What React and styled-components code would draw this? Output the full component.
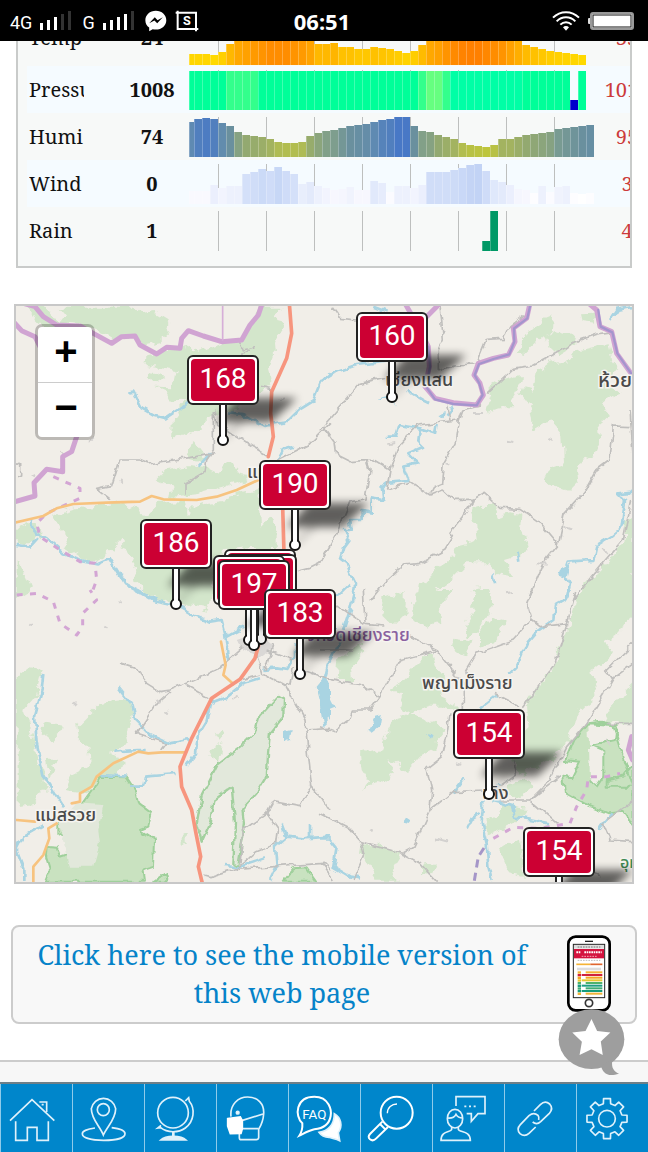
import React from "react";
import styled, { createGlobalStyle } from "styled-components";

const SERIF = '"Noto Serif", "Droid Serif", "DejaVu Serif Condensed", "Liberation Serif", serif';

const GlobalStyle = createGlobalStyle`
  * {
    box-sizing: border-box;
  }
  body {
    margin: 0;
    background: #ffffff;
    font-family: ${SERIF};
  }
`;

const Page = styled.div`
  min-height: 100vh;
  display: flex;
  flex-direction: column;
`;

/* ---------- status bar ---------- */

const StatusBar = styled.header`
  position: sticky;
  top: 0;
  z-index: 20;
  height: 41px;
  padding: 0 14px 0 10px;
  display: grid;
  grid-template-columns: 1fr auto 1fr;
  align-items: center;
  background: #000000;
  color: #ffffff;
  font-family: Roboto, "Liberation Sans", sans-serif;
`;

const StatusGroup = styled.div`
  display: flex;
  align-items: center;
  justify-content: ${(p) => (p.$end ? "flex-end" : "flex-start")};
  gap: 8px;
`;

const Network = styled.span`
  padding-top: 4px;
  font-size: 18px;
  line-height: 20px;
`;

const Clock = styled.time`
  font-family: "Noto Sans", sans-serif;
  font-size: 22px;
  font-weight: 700;
  line-height: 40px;
`;

function Signal({ level }) {
  return (
    <svg width="34" height="20" viewBox="0 0 34 20">
      {[7, 10, 13, 16, 19].map((h, i) => (
        <rect key={h} x={i * 7} y={19 - h} width="3" height={h} fill={i < level ? "#fff" : "#333"} />
      ))}
    </svg>
  );
}

function Messenger() {
  return (
    <svg width="22" height="22" viewBox="0 0 63 63">
      <path d="M31 2C14 2 1 14 1 29c0 9 4 16 11 21v11l10-6c3 1 6 1 9 1 17 0 30-12 30-27S48 2 31 2z" fill="#fff" />
      <path d="M12 38l16-17 8 8 15-8-16 17-8-8z" fill="#000" />
    </svg>
  );
}

function CropIcon() {
  return (
    <svg width="24" height="22" viewBox="0 0 72 66">
      <path d="M8 2V57H70M2 8H63V64" fill="none" stroke="#fff" strokeWidth="6" />
      <text x="36" y="46" textAnchor="middle" fill="#fff" fontFamily="Roboto, sans-serif" fontSize="38" fontWeight="700">
        S
      </text>
    </svg>
  );
}

function Wifi() {
  return (
    <svg width="28" height="20" viewBox="0 0 84 60">
      <g fill="none" stroke="#fff" strokeWidth="6">
        <path d="M3 20C25-2 59-2 81 20" />
        <path d="M14 31C30 15 54 15 70 31" />
        <path d="M25 41C35 31 49 31 59 41" />
      </g>
      <path d="M33 49C38 44 46 44 51 49L42 59z" fill="#fff" />
    </svg>
  );
}

function Battery() {
  return (
    <svg width="46" height="18" viewBox="0 0 46 18">
      <rect x="0" y="6" width="3" height="6" rx="1" fill="#ddd" />
      <rect x="3" y="1" width="42" height="16" rx="2" fill="#fff" stroke="#999" strokeWidth="2" />
      <rect x="5" y="3" width="38" height="12" fill="#fff" stroke="#111" strokeWidth="1" />
    </svg>
  );
}

/* ---------- readings table ---------- */

const Panel = styled.section`
  margin: -33px 16px 0;
  padding: 0 0 12px 9px;
  border: 2px solid #c9cbca;
  background: #f7f9f8;
  overflow: hidden;
`;

const Readings = styled.table`
  width: 630px;
  table-layout: fixed;
  border-collapse: collapse;
  font-size: 20px;
  line-height: 28px;
  color: #111111;
`;

const Row = styled.tr`
  height: ${(p) => (p.$tall ? 56 : 47)}px;
  background: ${(p) => (p.$shaded ? "#f5fbff" : "transparent")};
`;

const Label = styled.th`
  width: 88px;
  padding: 0 2px;
  font-weight: 400;
  text-align: left;
`;

const LabelText = styled.div`
  width: 55px;
  overflow: hidden;
`;

const Value = styled.td`
  width: 74px;
  padding: 0;
  font-weight: 700;
  text-align: center;
`;

const ChartCell = styled.td`
  width: 408px;
  padding: 0 0 ${(p) => (p.$tall ? 1 : 0)}px;
  vertical-align: ${(p) => (p.$tall ? "bottom" : "middle")};
`;

const Max = styled.td`
  width: 60px;
  padding: 0;
  color: #cc3b3b;
  text-align: center;
`;

const Chart = styled.svg`
  display: block;
`;

const mix = (stops, h) => {
  let i = 1;
  while (i < stops.length - 1 && h > stops[i][0]) i++;
  const [h0, a] = stops[i - 1];
  const [h1, b] = stops[i];
  const t = Math.max(0, Math.min(1, (h - h0) / (h1 - h0)));
  return `rgb(${a.map((v, k) => Math.round(v + (b[k] - v) * t)).join(",")})`;
};

const tempStops = [[10, [255, 217, 0]], [21, [255, 184, 0]], [38, [255, 128, 0]]];
const humiStops = [
  [10, [190, 197, 58]],
  [15, [175, 187, 84]],
  [22, [147, 169, 112]],
  [27, [126, 158, 142]],
  [31, [106, 144, 158]],
  [35, [95, 138, 178]],
  [40, [72, 120, 198]],
];
const windStops = [
  [10, [255, 255, 255]],
  [14, [247, 247, 254]],
  [18, [237, 241, 253]],
  [22, [227, 234, 251]],
  [30, [212, 224, 249]],
  [40, [194, 211, 245]],
];

const temp = [
  11, 11, 11, 10, 13, 21, 26, 28, 30, 32, 34, 34, 34, 32, 30, 27, 21, 21, 22, 18, 18, 16, 16, 18, 17,
  16, 14, 12, 14, 20, 26, 28, 32, 35, 37, 38, 38, 36, 34, 32, 28, 24, 20, 18, 16, 14, 13, 12, 11, 10,
];
const humi = [
  35, 38, 39, 38, 34, 31, 25, 22, 21, 20, 18, 15, 14, 14, 15, 21, 24, 26, 27, 29, 31, 32, 33, 35, 37,
  38, 40, 40, 31, 26, 25, 22, 20, 18, 14, 12, 11, 10, 12, 18, 18, 20, 22, 23, 24, 25, 28, 29, 30, 31, 32,
];
const wind = [
  13, 13, 13, 19, 16, 18, 18, 30, 32, 35, 33, 37, 33, 30, 20, 22, 18, 16, 14, 15, 17, 14, 14, 23, 21,
  12, 18, 18, 16, 19, 32, 32, 32, 34, 36, 39, 40, 33, 24, 22, 19, 15, 14, 11, 18, 12, 17, 18, 11, 10, 11,
];

const pressureColor = (i) => {
  if (i === 48) return "#0000cc";
  if (i === 30 || i === 31) return "#66ff80";
  if ((i > 4 && i < 9) || i === 29 || i === 32) return "#33ff8c";
  return i > 32 && i < 42 ? "#00ffa6" : "#00ff99";
};

const scale = (heights, stops) => heights.map((h) => ({ h, color: mix(stops, h) }));

const rows = [
  { label: "Temp", value: 24, max: 35, bars: scale(temp, tempStops), tall: true },
  {
    label: "Pressure",
    value: 1008,
    max: 1012,
    bars: Array.from({ length: 50 }, (_, i) => ({ h: i === 48 ? 10 : 39, color: pressureColor(i) })),
    shaded: true,
  },
  { label: "Humi", value: 74, max: 95, bars: scale(humi, humiStops) },
  { label: "Wind", value: 0, max: 3, bars: scale(wind, windStops), shaded: true },
  {
    label: "Rain",
    value: 1,
    max: 4,
    bars: Array.from({ length: 50 }, (_, i) => ({ h: i === 37 ? 10 : i === 38 ? 40 : 0, color: "#009966" })),
  },
];

function BarChart({ bars }) {
  return (
    <Chart width="408" height="40" viewBox="0 0 408 40">
      {Array.from({ length: 8 }, (_, i) => (
        <rect key={i} x={29 + i * 48} y="0" width="1" height="40" fill="#bdbfbe" />
      ))}
      {bars.map((bar, i) => {
        const x = i === 0 ? 0 : 5 + (i - 1) * 8;
        const w = i === 0 ? 5 : 8;
        if (!bar.h) return null;
        return (
          <g key={i}>
            <rect x={x} y={40 - bar.h} width={w} height={bar.h} fill={bar.color} />
            <rect x={x} y={40 - bar.h} width="1" height={bar.h} fill="#fff" opacity="0.25" />
          </g>
        );
      })}
    </Chart>
  );
}

/* ---------- map ---------- */

const MapBox = styled.section`
  position: relative;
  height: 580px;
  margin: 36px 14px 0;
  border: 2px solid #c8c8c8;
  background: #f1eee8;
  overflow: hidden;
`;

const MapDrawing = styled.svg`
  position: absolute;
  left: 0;
  top: 0;
  width: 616px;
  min-width: 100%;
  height: 576px;
`;

const ZoomControl = styled.div`
  position: absolute;
  left: 19px;
  top: 18px;
  z-index: 5;
  width: 60px;
  border: 3px solid rgba(0, 0, 0, 0.22);
  border-radius: 7px;
  background: #ffffff;
  background-clip: padding-box;
  display: flex;
  flex-direction: column;
`;

const ZoomButton = styled.button`
  height: 55px;
  padding: 0 0 0 2px;
  border: 0;
  background: transparent;
  color: #000000;
  font-family: "Liberation Sans", sans-serif;
  font-size: 40px;
  font-weight: 700;
  line-height: 48px;
  display: flex;
  justify-content: center;
  align-items: flex-start;

  & + & {
    border-top: 1px solid #cccccc;
  }
`;

const Pin = styled.button`
  position: absolute;
  width: 72px;
  height: 90px;
  padding: 0;
  border: 0;
  background: transparent;
  color: #ffffff;
  font-family: Roboto, sans-serif;
  font-size: 28px;
  line-height: 48px;
  display: flex;
  justify-content: center;
  align-items: flex-start;
`;

const PinShape = styled.svg`
  position: absolute;
  left: 0;
  top: 0;
  overflow: visible;
`;

const PinText = styled.span`
  position: relative;
`;

/* tip of every marker inside the map box */
const pins = [
  { x: 376, y: 91, aqi: 160 },
  { x: 207, y: 134, aqi: 168 },
  { x: 279, y: 239, aqi: 190 },
  { x: 160, y: 298, aqi: 186 },
  { x: 244, y: 328 },
  { x: 245, y: 333 },
  { x: 233, y: 334 },
  { x: 238, y: 339, aqi: 197 },
  { x: 284, y: 368, aqi: 183 },
  { x: 473, y: 488, aqi: 154 },
  { x: 543, y: 606, aqi: 154 },
];

function Marker({ x, y, aqi }) {
  return (
    <Pin type="button" style={{ left: x - 36, top: y - 85 }}>
      <PinShape width="72" height="90" viewBox="0 0 72 90">
        {aqi && (
          <g filter="url(#pinShadow)" opacity="0.6">
            <path d="M28 67L50 43H110L84 67z" />
            <path d="M36 84L60 62" stroke="#000" strokeWidth="3" opacity="0.5" />
          </g>
        )}
        <rect x="33" y="47" width="6" height="34" fill="#fff" stroke="#222" strokeWidth="2" />
        <circle cx="36" cy="85" r="5" fill="#fff" stroke="#111" strokeWidth="2" />
        <rect x="34" y="47" width="4" height="35" fill="#fff" />
        <rect x="1" y="1" width="70" height="48" rx="5" fill="#fff" stroke="#222" strokeWidth="2" />
        <rect x="4" y="4" width="64" height="42" rx="4" fill="#cc0033" />
      </PinShape>
      <PinText>{aqi}</PinText>
    </Pin>
  );
}

const NW = "translate(10 300) scale(0.33333)";
const NE = "translate(320 300) scale(0.33333)";
const SW = "translate(10 590) scale(0.33333)";
const SE = "translate(320 590) scale(0.33333)";

const forests = [
  [NW, "M50 20H110L150 70L120 100L80 60z M140 20H375L385 40L430 30L480 60L465 80L480 100L450 130L400 140L375 105L330 120L300 110L215 75L150 70L165 50z"],
  [NW, "M755 20H815L800 50L822 80L792 125L795 160L780 200L785 240L750 275L700 295L680 330L600 355L570 385L520 405L492 418L495 350L530 300L485 305L470 275L435 260L490 262L500 210L410 195L412 165L530 140L560 160L640 130L700 115z"],
  [NW, "M410 215L440 220L465 235L450 248L415 235z M545 425L560 445L580 470L600 480L560 478L530 470z"],
  [NW, "M440 540L470 510L540 498L590 505L620 520L660 480L690 520L740 530L640 560L560 582L480 592L485 560z"],
  [NW, "M130 645L200 625L330 610L390 625L400 650L440 612L525 605L530 640L560 610L640 600L700 580L745 570L750 680L780 650L800 700V740L640 750L610 830L600 920H540L430 890L380 850L372 790L330 720L310 750L240 790L165 740L180 715L150 690z"],
  [NW, "M20 680L60 665L95 700L50 740L20 720z M20 780L45 830L62 870L30 890H20z"],
  [NE, "M590 160L625 95L660 60L700 42L695 90L640 135L610 165z M670 110L700 92L750 105L770 130L720 160L680 140z M780 40L830 38L825 65L785 60z"],
  [NE, "M865 130L875 185L900 215L865 235L870 260L905 275L860 290L835 310L862 350L832 375L838 420L818 470L770 500L775 545L745 575L700 560L675 535L690 505L735 490L730 400L700 365L670 372L640 390L630 320L600 280L605 265L640 270L650 220L690 190L740 180L780 150z"],
  [NE, "M500 335L520 280L505 265L545 240L605 225L605 250L575 300L580 325L540 325z"],
  [NE, "M450 630L480 620L525 622L530 650L570 640L605 645L600 680L622 735L605 765L555 780L580 830L530 820L500 790L440 790L380 850L340 880L330 920H290L300 850L330 840L345 805L405 770L410 740L470 725L465 670z"],
  [NE, "M940 640V920H760L800 850L860 790L910 730L915 660z M190 890L230 875L260 880V920H190z M460 870L480 865L490 920H450z"],
  [SE, "M200 20H250L260 70L220 110L190 80z M280 20L340 0H400L350 60L355 95L310 110L280 90z M470 0H510L520 40L470 130L440 140L435 110L460 60z"],
  [SE, "M480 120L520 80L560 90L545 120L520 160L480 170z M400 140L460 150L445 200L395 180z M55 210L120 160L130 180L95 230L100 270L50 270z"],
  [SE, "M300 210L340 190L350 230L380 270L360 320L400 340L420 360L370 350L330 350L270 370L240 350L250 320L210 300L250 280L270 240z M230 380L270 370L330 390L375 420L350 450L340 480L300 500L260 545L230 520L180 500L200 440z M120 490L190 480L200 510L225 540L200 580L170 570L120 600L145 570L125 540z"],
  [SE, "M775 0H940V60L900 130L850 160L880 190L820 240L830 320L770 370L760 410L730 470L700 500L600 560L560 480L620 420L615 350L700 230L740 120z"],
  [SE, "M940 280L870 360L850 400L940 400z M560 590L620 560L640 590L600 625L565 610z M500 690L560 650L620 660L600 690L540 720L500 740z M540 780L600 740L610 860L570 850z M125 760L180 765L240 790L215 830L230 875H160L150 830L120 790z M300 830L350 820L340 850L300 850z"],
  [SW, "M20 260L55 235L95 240L75 320L40 360L70 440L75 470L110 590L70 640L20 645z M100 400L150 410L130 460L95 430z M110 500L150 500L130 530L120 570z"],
  [SW, "M205 400L265 340L340 330L370 350L355 440L360 460L330 480L300 490L350 520L300 560L230 610L170 600L180 560L240 530L235 480L210 450z"],
  [SW, "M600 500L620 460L640 465L630 510z M615 440L640 415L645 430L625 455z M515 730L530 728V765L515 760z M380 0H560L600 60L500 40z"],
];

const reserves = [
  [SW, "M210 650L245 600L270 560L350 562L375 600L385 640L425 670L415 710L390 720L435 750L432 830L400 840L405 875H105L120 840L108 800L110 768L140 770L150 800L180 790L170 740L145 730V700z"],
  [SW, "M820 875L850 835L890 832L920 875z M430 875L465 850L470 875z"],
  [SE, "M805 400L840 395L890 405L885 450L815 465L850 480V560L830 590L810 570M805 400L760 450L735 510L780 515L755 565L730 560L735 610L790 640L865 670L910 665L940 710V520L910 560L860 570V590L940 590L880 405z"],
];

const greys = [
  [NW, "M690 125L700 150L740 140M690 160L720 155M610 330V450L590 480L585 515L525 550V590M615 460L560 470L490 480L420 492L390 480L330 480L305 560L260 568L300 600M615 325L620 370L680 410L720 435L770 465M960 370L900 430L830 465L800 480M940 380L955 410M960 740L930 790L900 805L860 815M750 262L790 270M20 490L32 495V525L20 530"],
  [NE, "M35 20L60 55L110 60M360 20L365 60L370 120L355 150V210M355 210L400 195L470 192L500 118L550 115L560 90L600 60L625 40M0 390L120 250L200 230M500 280L580 205L640 195L780 120L840 100L880 95M10 380L45 430L50 465L90 485L160 480L210 510L235 440L295 375L415 360L425 330L480 315M380 320L390 360M415 360L405 430L370 490L365 550L340 560L330 580M140 480L150 510L135 600L90 605L50 700L0 790M210 510L200 570L270 545L330 585L370 570L400 598H460L490 580L540 625L600 628L660 670L715 735L670 790L625 900M460 600L430 650L390 700L400 710L375 750L300 790L250 795L190 850L150 900M715 735L735 640L790 580L830 510L870 480L880 378L930 380M930 330L940 480M935 600L910 720L850 790L760 900"],
  [SW, "M330 218L375 232L410 280L450 305L480 300L540 275L620 240L700 170M480 305L440 340L380 430L470 460L455 480M530 285L600 325M675 275L750 255M740 190L755 250L830 290L885 390L905 590L890 610L870 650L790 635L770 670L700 720L690 820M905 590L940 630L960 660M770 670L805 720L800 760L740 785L680 835L600 860L580 855M680 838L940 820L960 840M770 180L850 210M890 420L960 415M790 160L765 240M850 230L840 280L825 290M880 240L960 270"],
  [SE, "M130 0L135 100L190 105M0 180L100 180M0 260L60 275L130 285L180 320L240 210L350 180L430 280L430 360M180 320L150 360H100L90 390L40 425L0 410M350 180L270 140M635 0L620 40L635 90L660 110L745 100M635 90L580 150L470 190L440 240L445 270M770 0L745 90L700 230L610 350M520 310L600 350M390 370L380 440L365 500L320 535L335 600L330 660L280 770L245 790L120 755L80 710L0 670M330 660L400 605L490 600M540 590L590 555L580 510M540 630L630 630L720 560M630 630L690 570L740 470L800 400L860 300L880 265L860 240L940 160M880 265L940 220M630 630L710 700L760 780L780 830L840 860M245 790L300 820L350 875M120 755L130 800L100 870M0 820L40 870M860 690L940 630M850 700L870 750L940 755M940 400L860 400M0 10L130 100"],
];

/* villages and ponds too small for an outline */
const specks = [
  [NW, "M150 455l16 6M240 425l10-8M65 520l10 6M810 300l14-6M505 755l12 8M330 540l8 8"],
  [NE, "M465 345h24M560 425l20 4M685 420l12-6M380 490l14 4M205 430l18-4M555 880l24-4M650 790l30 4M730 680l24 8M850 745l14 20"],
  [SW, "M55 100l8 6M280 110l10 6M440 330l8 10M330 40l8-8M190 345l8-6M130 650l10 4M470 360l6 8M670 330l16-10"],
  [SE, "M150 720l14 6M345 745l40 10M410 520l14 4M620 50l6 14M860 450l10 20"],
];

const rivers = [
  [NW, 8, "M355 278L370 275L395 325L430 345L470 355L500 335L540 300M660 340L700 345L760 378L825 368L870 325L910 300L930 250L960 220M65 660L70 690L110 715L150 750L210 780L265 790L300 775L345 850L400 880L440 900M20 735L60 740L85 712M800 480L815 450L850 440M565 500L600 460"],
  [NE, 8, "M0 245L40 220L110 195L200 185M200 410H225L235 375L300 385L345 400L350 375M300 385L295 425L310 440L265 460L295 490L250 500L265 540L205 545L185 560L190 600L155 595V635L125 630V660L90 660L95 690L75 690L85 720L70 740L60 775L80 790L90 820L105 850L100 900M50 890L90 850M160 20L200 35M260 270L310 300L330 310M400 320L380 350M870 60L890 30L940 20M935 575L895 580L915 600L905 680L870 710L830 735L820 780L740 785L730 815L750 850L740 895M590 755L595 785M520 820L525 850"],
  [SW, 8, "M380 0L430 30L500 45L550 75L600 95L635 90L645 130L655 210M645 140L700 110M100 255L95 300L75 380L80 460L100 560L130 600L165 655M325 295L365 345L375 390L415 430L480 460L540 450M760 240L800 235L830 240L855 200V160M750 265L700 280L650 320L600 340L590 390L560 440L555 490L530 530M360 590L400 590L405 560L500 552M310 485L380 480L410 480M270 555L350 560M100 705L40 740L20 780L40 830V870M815 700L830 740L880 745L960 740M830 740L795 770L800 830L780 870M645 825L690 830L765 805M900 705V740"],
  [SE, 8, "M105 0L90 60L60 150L20 230L10 270M750 0L740 25L705 45L700 90L650 125L620 160L590 230L565 255M530 315L480 355M435 565L400 610M490 630L485 700L500 760L505 830L515 870M440 715L455 685L480 670M520 630L575 645L585 680L640 690L690 700M0 745H30L50 770L40 830L90 860L120 865M540 580L520 600M875 670L835 720"],
];

const lakes = [
  [SW, "M920 290L945 260L960 290V390L935 350z M825 425L845 420L840 450L825 455z"],
  [SE, "M0 280L20 275L30 320L45 350L20 360V410H10L0 350z M145 420L165 380L185 375L180 405L155 425z M255 680L270 690L265 700L245 695z M318 432L335 436L330 446z"],
  [NE, "M170 300L210 290L230 315L215 300z M725 800L750 790L740 830L715 825z M355 345L375 340L370 358z"],
];

const labels = [
  { x: 385, y: 386, text: "เชียงแสน" },
  { x: 598, y: 387, text: "ห้วยทราย", size: 20 },
  { x: 247, y: 478, text: "แม่จัน" },
  { x: 422, y: 689, text: "พญาเม็งราย" },
  { x: 35, y: 821, text: "แม่สรวย" },
  { x: 482, y: 799, text: "เทิง" },
  { x: 620, y: 868, text: "อุทยาน", color: "#3f8a55", size: 16 },
  { x: 296, y: 641, text: "จังหวัดเชียงราย", color: "#8b62a0" },
];

function MapArt() {
  return (
    <MapDrawing viewBox="16 306 616 576" preserveAspectRatio="xMidYMid slice">
      <defs>
        <filter id="rough" x="0" y="0" width="1" height="1">
          <feTurbulence type="fractalNoise" baseFrequency="0.09" numOctaves="3" seed="4" />
          <feDisplacementMap in="SourceGraphic" scale="12" xChannelSelector="R" yChannelSelector="G" />
        </filter>
        <filter id="wiggle" x="0" y="0" width="1" height="1">
          <feTurbulence type="fractalNoise" baseFrequency="0.1" numOctaves="2" seed="9" />
          <feDisplacementMap in="SourceGraphic" scale="7" xChannelSelector="R" yChannelSelector="G" />
        </filter>
        <filter id="pinShadow" x="-0.4" y="-0.8" width="1.8" height="2.6">
          <feGaussianBlur stdDeviation="4" />
        </filter>
      </defs>

      <g fill="#d3e6cb" filter="url(#rough)">
        <rect x="0" y="290" width="660" height="610" fill="#f1eee8" />
        {forests.map(([at, d]) => (
          <path key={d} d={d} transform={at} />
        ))}
      </g>

      <g filter="url(#wiggle)" strokeLinejoin="round" fill="none">
        <rect x="0" y="290" width="660" height="610" fill="none" />
        {reserves.map(([at, d]) => (
          <path key={d} d={d} transform={at} fill="#c9e2c0" stroke="#9fd09b" strokeWidth="6" />
        ))}
        <path
          transform={SW}
          d="M145 700L200 640L280 645L265 720L270 760L250 830L180 830L160 740z"
          fill="#e2e8db"
        />
        <path
          transform={SW}
          d="M805 315L822 325L820 380L780 430L775 480L770 560L740 610L700 655L705 700L685 825L670 820L675 700L665 590L610 630L600 700L575 755L560 700L575 620L625 520L690 470L730 430L745 380z"
          fill="#e2e8db"
          stroke="#a3d09f"
          strokeWidth="7"
        />
        {rivers.map(([at, w, d]) => (
          <path key={d} d={d} transform={at} stroke="#a9d4e2" strokeWidth={w} />
        ))}
        {lakes.map(([at, d]) => (
          <path key={d} d={d} transform={at} fill="#a9d4e2" />
        ))}
        <path transform={SW} d="M680 150L740 130L790 170L750 200L700 180z" fill="#dad8d6" />
        {greys.map(([at, d]) => (
          <path key={d} d={d} transform={at} stroke="#c0bfbd" strokeWidth="5" />
        ))}
        {specks.map(([at, d]) => (
          <path key={d} d={d} transform={at} stroke="#d3d1cf" strokeWidth="6" />
        ))}
      </g>

      <g fill="none" strokeLinejoin="round" strokeLinecap="round">
        <g stroke="#d0a4d2" strokeWidth="15">
          <path
            transform={NW}
            d="M40 10L75 20L100 50L140 75L210 78L250 100L305 130L335 110L375 108L390 135L440 162L470 142L510 145L515 115L535 92L580 108L635 125L695 120L720 75L745 45L755 15"
          />
          <path transform={NW} d="M15 70L35 92L75 110L90 140M200 410L185 455L158 470V515L110 508L72 548L75 588L15 605" />
          <path transform={NE} d="M255 10L275 45L300 90L325 140L328 200L315 260L345 295L400 308L470 315L490 285L480 250L462 225L475 190L520 175L565 165L585 125L580 85L620 55L630 10M360 10L320 50L290 85M800 5L830 30L840 80L875 95L890 160L940 230" />
        </g>
        <g stroke="#9a92cc" strokeWidth="7" opacity="0.8">
          <path transform={NE} d="M325 140L330 200L318 260L345 298L400 312L470 316L488 285L478 250L464 225L477 192L520 177L568 163L583 125L582 85L622 55L632 10M835 30L842 80L877 97L892 160L940 230" />
        </g>
        <path transform={NW} d="M638 10V120" stroke="#d6aed8" strokeWidth="5" />
        <g stroke="#d3a5d4" strokeWidth="9" strokeDasharray="18 22" strokeLinecap="butt">
          <path transform={NW} d="M130 530L210 565V595L110 640L80 670L90 710L150 750L210 785L255 790L260 840L245 880" />
          <path transform={SW} d="M20 15L80 10L130 35L150 100L200 135L218 110V70L260 30L240 0" />
          <path transform={SE} d="M520 745L580 712L660 715L750 700L770 650L800 600L805 560L860 560L900 550" />
        </g>
        <path transform={SE} d="M463 872L475 800L500 762" stroke="#a596c8" strokeWidth="9" strokeDasharray="24 16" strokeLinecap="butt" />
        <path transform={SE} d="M935 440L925 480L938 510" stroke="#d0a4d2" strokeWidth="15" />

        <g stroke="#f7c37f" strokeWidth="8">
          <path transform={NW} d="M15 668L100 648L140 625L190 612L290 608L390 605L425 588L460 598L560 600L620 590L680 570L745 540" />
          <path transform={SW} d="M525 487H455L415 490L385 485L310 520L260 560L245 590L210 610V635L185 640M20 690L75 695M140 700L115 715L118 745L100 795L70 830V880M633 155L647 225L640 255L670 282" />
        </g>
        <g stroke="#f7957e" strokeWidth="11">
          <path transform={NW} d="M838 10L845 100L830 175L785 275L782 340L790 410L775 470M818 620L822 760" />
          <path transform={SW} d="M750 150L735 205L690 268L605 325L580 375L545 445L510 530L515 590L545 660L558 730L572 800L565 830L577 880" />
        </g>
      </g>

      {labels.map((l) => (
        <text
          key={l.text}
          x={l.x}
          y={l.y}
          fill={l.color || "#4a4a4a"}
          stroke="#f6f4f0"
          strokeWidth="3"
          paintOrder="stroke"
          fontFamily='"Noto Sans Thai", "Noto Sans", sans-serif'
          fontSize={l.size || 18}
          fontWeight="500"
        >
          {l.text}
        </text>
      ))}
    </MapDrawing>
  );
}

/* ---------- mobile version link ---------- */

const MobileLink = styled.a`
  min-height: 98px;
  margin: 41px 11px 36px;
  padding: 8px 24px 10px 12px;
  border: 2px solid #cccccc;
  border-radius: 8px;
  background: #f8f8f8;
  display: flex;
  align-items: center;
  color: #0583c9;
  font-size: 27px;
  line-height: 38px;
  text-align: center;
  text-decoration: none;
`;

const MobileText = styled.span`
  flex: 1;
  padding: 0 28px 0 0;
`;

function PhoneArt() {
  const lines = ["#f5b335", "#d0213f", "#f5a523", "#e9c832", "#4fb36c", "#1f9d84", "#3fae75", "#159c7c", "#f0b43a"];
  return (
    <svg width="44" height="77" viewBox="80 45 132 231">
      <rect x="84" y="50" width="124" height="221" rx="22" fill="#fff" stroke="#000" strokeWidth="8" />
      <path d="M134 64H158" stroke="#222" strokeWidth="4" />
      <rect x="99" y="73" width="94" height="160" fill="#fff" stroke="#222" strokeWidth="3" />
      <rect x="101" y="75" width="90" height="11" fill="#ddd" />
      <path d="M112 81H180" stroke="#777" strokeWidth="3" strokeDasharray="5 3" />
      <rect x="101" y="87" width="90" height="28" fill="#d4133f" />
      <path d="M108 97H122M132 97H184" stroke="#fff" strokeWidth="6" strokeDasharray="5 2" />
      <path d="M124 109H170" stroke="#f3a5b4" strokeWidth="3" strokeDasharray="5 3" />
      <path d="M112 121H180" stroke="#bbb" strokeWidth="3" strokeDasharray="5 3" />
      <path d="M108 133H150" stroke="#f5b335" strokeWidth="5" />
      <path d="M150 133H186" stroke="#e0662f" strokeWidth="5" />
      <path d="M110 147H182" stroke="#ddd" strokeWidth="8" />
      {lines.map((c, i) => (
        <g key={c}>
          <rect x="112" y={154 + i * 8} width="10" height="7" fill={c} />
          <rect x={i % 2 ? 124 : 136} y={154 + i * 8} width={i % 2 ? 62 : 50} height="6" fill={c} />
        </g>
      ))}
      <circle cx="146" cy="249" r="11" fill="#fff" stroke="#333" strokeWidth="5" />
    </svg>
  );
}

const StarButton = styled.button`
  position: fixed;
  right: 23px;
  bottom: 76px;
  z-index: 15;
  padding: 0;
  border: 0;
  background: transparent;
  line-height: 0;
`;

const Strip = styled.div`
  flex: 1;
  min-height: 22px;
  border-top: 2px solid #cccccc;
  background: #f7f7f7;
`;

/* ---------- bottom navigation ---------- */

const BottomNav = styled.nav`
  position: sticky;
  bottom: 0;
  z-index: 10;
  display: flex;
  border-top: 2px solid #6d7f88;
  background: #0086cb;
`;

const NavItem = styled.a`
  flex: 1;
  height: 69px;
  border-left: 1px solid #8fcbea;
  display: flex;
  overflow: hidden;
`;

const NavIcon = styled.svg`
  flex: none;
  width: 72px;
  height: 69px;
  margin-left: -1px;
  fill: none;
  stroke: #dff1fb;
  stroke-width: 5;
`;

const gearPath = () => {
  const pts = [];
  for (let k = 0; k < 8; k++) {
    [[-0.24, 46], [-0.17, 61], [0.17, 61], [0.24, 46]].forEach(([da, r]) => {
      const a = (k * Math.PI) / 4 + da;
      pts.push(`${(537 + r * Math.sin(a)).toFixed(1)} ${(128 - r * Math.cos(a)).toFixed(1)}`);
    });
  }
  return `M${pts.join("L")}z`;
};

const navItems = [
  {
    name: "Home",
    x: 0,
    art: (
      <>
        <path d="M30 134L96 71L163 134" />
        <path d="M118 78H140V108M125 86H131" />
        <path d="M47 136V193H82V154H111V193H145V136" />
      </>
    ),
  },
  {
    name: "Location",
    x: 216,
    art: (
      <>
        <path d="M310 177C300 150 274 130 274 98A37 37 0 0 1 347 98C347 130 322 150 310 177z" />
        <circle cx="310" cy="101" r="18" />
        <path d="M285 156C260 159 246 166 247 174C248 186 275 193 311 193C348 193 375 186 375 173C375 165 360 158 335 155" />
      </>
    ),
  },
  {
    name: "World",
    x: 432,
    art: (
      <>
        <circle cx="519" cy="110" r="46" />
        <path d="M556 75L566 65L568 76C586 98 583 136 556 156C535 171 502 171 482 155L473 156L483 148" />
        <path d="M520 168V182" strokeWidth="8" />
        <path d="M482 192H558C550 184 535 181 520 181C505 181 490 184 482 192z" fill="#dff1fb" />
      </>
    ),
  },
  {
    name: "Mask",
    x: 3,
    art: (
      <>
        <path d="M48 122C44 85 70 63 98 63C130 63 148 85 146 113C145 135 138 148 131 160V185Q130 191 124 191H79Q73 191 73 185V172" />
        <path d="M80 134L144 114M80 158H131" />
        <path d="M38 128L76 123L82 134V158L78 172L46 173L38 150z" fill="#fff" stroke="#fff" />
        <circle cx="68" cy="110" r="4" fill="#fff" />
      </>
    ),
  },
  {
    name: "Questions",
    x: 219,
    art: (
      <>
        <path
          d="M262 142C238 120 242 62 298 62C344 62 350 105 347 120C342 150 318 158 298 160C280 164 264 174 253 179C260 168 263 156 262 142z"
          strokeWidth="6"
          stroke="#fff"
        />
        <path d="M358 113C378 124 384 150 370 170L374 194C362 187 350 188 342 184C330 184 318 178 312 169C340 166 358 145 358 113z" fill="#fff" />
        <text x="298" y="130" textAnchor="middle" fill="#fff" stroke="none" fontFamily="Roboto, sans-serif" fontSize="40">
          FAQ
        </text>
      </>
    ),
  },
  {
    name: "Search",
    x: 435,
    art: (
      <g stroke="#fff" strokeWidth="6">
        <circle cx="545" cy="110" r="48" />
        <path d="M517 112C517 95 530 84 546 84" strokeWidth="4" />
        <path d="M502 137L465 174Q457 183 465 190Q474 197 483 188L519 153M495 144L511 160" />
      </g>
    ),
  },
  {
    name: "Forum",
    x: 12,
    art: (
      <>
        <path d="M84 90V62H171V113H150L130 136V113H116" />
        <path d="M109 91H115M123 91H129M137 91H143" />
        <ellipse cx="81" cy="128" rx="23" ry="28" />
        <path d="M59 126C70 127 80 123 84 115C88 122 95 126 104 126" />
        <path d="M71 153V160C69 170 39 162 39 193H127C127 163 93 170 91 160V153" />
      </>
    ),
  },
  {
    name: "Links",
    x: 228,
    art: (
      <>
        <path d="M323 153L303 172Q290 184 276 173Q264 160 277 146L303 119Q317 107 330 118Q334 124 332 132" />
        <path d="M318 105L337 86Q351 72 365 84Q377 97 364 112L338 137Q326 148 314 138" />
      </>
    ),
  },
  {
    name: "Settings",
    x: 444,
    art: (
      <g strokeLinejoin="round">
        <path d={gearPath()} />
        <circle cx="537" cy="128" r="25" />
      </g>
    ),
  },
];

export default function App() {
  return (
    <Page>
      <GlobalStyle />
      <StatusBar>
        <StatusGroup>
          <Network>4G</Network>
          <Signal level={3} />
          <Network>G</Network>
          <Signal level={4} />
          <Messenger />
          <CropIcon />
        </StatusGroup>
        <Clock>06:51</Clock>
        <StatusGroup $end>
          <Wifi />
          <Battery />
        </StatusGroup>
      </StatusBar>

      <Panel>
        <Readings>
          <tbody>
            {rows.map((row) => (
              <Row key={row.label} $tall={row.tall} $shaded={row.shaded}>
                <Label scope="row">
                  <LabelText>{row.label}</LabelText>
                </Label>
                <Value>{row.value}</Value>
                <ChartCell $tall={row.tall}>
                  <BarChart bars={row.bars} />
                </ChartCell>
                <Max>{row.max}</Max>
              </Row>
            ))}
          </tbody>
        </Readings>
      </Panel>

      <MapBox>
        <MapArt />
        {pins.map((pin) => (
          <Marker key={`${pin.x}-${pin.y}`} {...pin} />
        ))}
        <ZoomControl>
          <ZoomButton type="button">+</ZoomButton>
          <ZoomButton type="button">−</ZoomButton>
        </ZoomControl>
      </MapBox>

      <MobileLink href="#mobile">
        <MobileText>Click here to see the mobile version of this web page</MobileText>
        <PhoneArt />
      </MobileLink>

      <Strip />

      <StarButton type="button" aria-label="Favourite">
        <svg width="67" height="67" viewBox="53 266 202 202">
          <g fill="#9e9e9e">
            <ellipse cx="154" cy="357" rx="99" ry="90" />
            <path d="M182 436C188 458 200 472 237 461C220 454 213 442 217 420z" />
          </g>
          <path d="M154 296L171 332L211 337L182 364L188 405L154 387L118 405L125 365L96 337L136 332z" fill="#fff" />
        </svg>
      </StarButton>

      <BottomNav>
        {navItems.map((item) => (
          <NavItem key={item.name} href={`#${item.name.toLowerCase()}`} aria-label={item.name}>
            <NavIcon viewBox={`${item.x} 24 216 207`}>{item.art}</NavIcon>
          </NavItem>
        ))}
      </BottomNav>
    </Page>
  );
}
